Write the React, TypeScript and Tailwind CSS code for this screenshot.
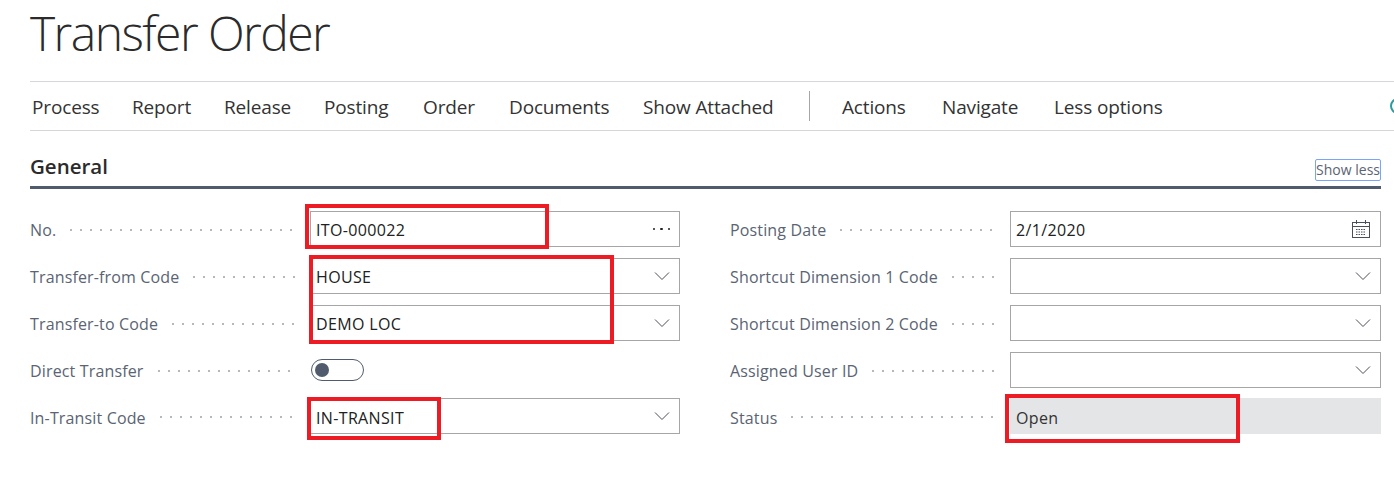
import React from 'react';

const actionsLeft = [
  { label: 'Process', width: 'w-[100px]' },
  { label: 'Report', width: 'w-[92px]' },
  { label: 'Release', width: 'w-[100px]' },
  { label: 'Posting', width: 'w-[99px]' },
  { label: 'Order', width: 'w-[86px]' },
  { label: 'Documents', width: 'w-[134px]' },
  { label: 'Show Attached', width: 'w-[166px]' },
];
const actionsRight = [
  { label: 'Actions', width: 'w-[100px]' },
  { label: 'Navigate', width: 'w-[112px]' },
  { label: 'Less options', width: 'w-[130px]' },
];

function Chevron() {
  return (
    <svg width="16" height="10" viewBox="0 0 16 10" fill="none" stroke="#4b4f58" strokeWidth="1">
      <path d="M1 1.5 L8 8.5 L15 1.5" />
    </svg>
  );
}

function Calendar() {
  return (
    <svg width="20" height="20" viewBox="0 0 20 20" fill="none" stroke="#4b4f58" strokeWidth="1">
      <rect x="1.5" y="3.5" width="17" height="15" />
      <path d="M1.5 7.5 H18.5 M5.5 1 V5 M14.5 1 V5" />
      <path d="M5 10.5H15M5 13H15M5 15.5H15" strokeDasharray="1.5 1" />
    </svg>
  );
}

function Field({ label, wide, last, children }: { label: string; wide?: boolean; last?: boolean; children: React.ReactNode }) {
  return (
    <div className={last ? 'flex h-[36px] items-center pt-0' : 'flex h-[36px] items-center'}>
      <span className={last ? 'shrink-0 pt-[4px] text-[16px] tracking-[0.15px] text-[#5a6473]' : 'shrink-0 pt-[2px] text-[16px] tracking-[0.15px] text-[#5a6473]'}>{label}</span>
      <span className="mt-[2px] mr-[12px] ml-[10px] h-[4px] flex-1 bg-[radial-gradient(circle,#b4b8bf_1px,transparent_1.2px)] bg-[length:10px_4px]" />
      <div className={wide ? 'w-[371px] shrink-0' : 'w-[370px] shrink-0'}>{children}</div>
    </div>
  );
}

function Input({ value, icon, last }: { value?: string; icon?: React.ReactNode; last?: boolean }) {
  return (
    <div className="flex h-[36px] items-center justify-between border border-[#a6a6a6] pr-[9px] pl-[5px] text-[16px] tracking-[0.35px] text-[#212121]">
      <span className={last ? 'pt-[4px]' : 'pt-[2px]'}>{value}</span>
      {icon}
    </div>
  );
}

function Toggle() {
  return (
    <div className="ml-[1px] flex h-[22px] w-[53px] items-center rounded-full border border-[#505c6d] pl-[3px]">
      <span className="h-[14px] w-[14px] rounded-full bg-[#505c6d]" />
    </div>
  );
}

function Dots() {
  return (
    <span className="flex gap-[5px]">
      <i className="h-[2.5px] w-[2.5px] rounded-full bg-[#212121]" />
      <i className="h-[2.5px] w-[2.5px] rounded-full bg-[#212121]" />
      <i className="h-[2.5px] w-[2.5px] rounded-full bg-[#212121]" />
    </span>
  );
}

export default function App() {
  return (
    <div className="relative h-[478px] w-[1394px] overflow-hidden bg-white pl-[30px] font-['Open_Sans',sans-serif]">
      <h1 className="h-[81px] pt-[1px] text-[48px] leading-[64px] font-light tracking-[-1.55px] text-[#2b2b2b]">Transfer Order</h1>

      <div className="flex h-[50px] items-center border-y border-[#d5d5da] pt-[3px] pl-[2px] text-[19px] tracking-[-0.15px] text-[#333]">
        {actionsLeft.map((a) => (
          <span key={a.label} className={`${a.width} shrink-0`}>{a.label}</span>
        ))}
        <span className="mr-[32px] -mt-[3px] h-[30px] w-px shrink-0 bg-[#a6a6a6]" />
        {actionsRight.map((a) => (
          <span key={a.label} className={`${a.width} shrink-0`}>{a.label}</span>
        ))}
        <span className="-mr-[12px] ml-auto -mt-[3px] h-[16px] w-[16px] shrink-0 rounded-full border-2 border-[#2a9d9d]" />
      </div>

      <div className="mr-[13px]">
        <div className="flex h-[58px] items-end justify-between border-b-[3px] border-[#505c6d] pb-[6px]">
          <h2 className="text-[20.5px] leading-[28px] font-semibold text-[#2b2b2b]">General</h2>
          <span className="-mb-[1px] rounded-[2px] border border-[#7aa5f7] text-[14px] leading-[20px] text-[#5a6473]">Show less</span>
        </div>

        <div className="mt-[22px] grid grid-cols-[650px_651px] grid-rows-[36px_36px_36px_36px_36px] gap-x-[50px] gap-y-[11px]">
          <Field label="No."><Input value="ITO-000022" icon={<Dots />} /></Field>
          <Field label="Posting Date" wide><Input value="2/1/2020" icon={<Calendar />} /></Field>
          <Field label="Transfer-from Code"><Input value="HOUSE" icon={<Chevron />} /></Field>
          <Field label="Shortcut Dimension 1 Code" wide><Input icon={<Chevron />} /></Field>
          <Field label="Transfer-to Code"><Input value="DEMO LOC" icon={<Chevron />} /></Field>
          <Field label="Shortcut Dimension 2 Code" wide><Input icon={<Chevron />} /></Field>
          <Field label="Direct Transfer"><Toggle /></Field>
          <Field label="Assigned User ID" wide><Input icon={<Chevron />} /></Field>
          <div className="-mt-[1px]"><Field label="In-Transit Code" last><Input value="IN-TRANSIT" icon={<Chevron />} last /></Field></div>
          <div className="-mt-[1px]">
            <Field label="Status" wide last>
              <div className="flex h-[36px] items-center bg-[#e4e5e7] pt-[4px] pl-[6px] text-[16px] tracking-[0.35px] text-[#333]">Open</div>
            </Field>
          </div>
        </div>
      </div>

      {/* red annotation boxes drawn on top of the screenshot */}
      <div className="absolute top-[204px] left-[305px] h-[45px] w-[244px] border-[4px] border-[#ed1c24]" />
      <div className="absolute top-[255px] left-[309px] h-[89px] w-[305px] border-[4px] border-[#ed1c24]" />
      <div className="absolute top-[397px] left-[307px] h-[43px] w-[134px] border-[4px] border-[#ed1c24]" />
      <div className="absolute top-[394px] left-[1005px] h-[49px] w-[235px] border-[4px] border-[#ed1c24]" />
    </div>
  );
}
